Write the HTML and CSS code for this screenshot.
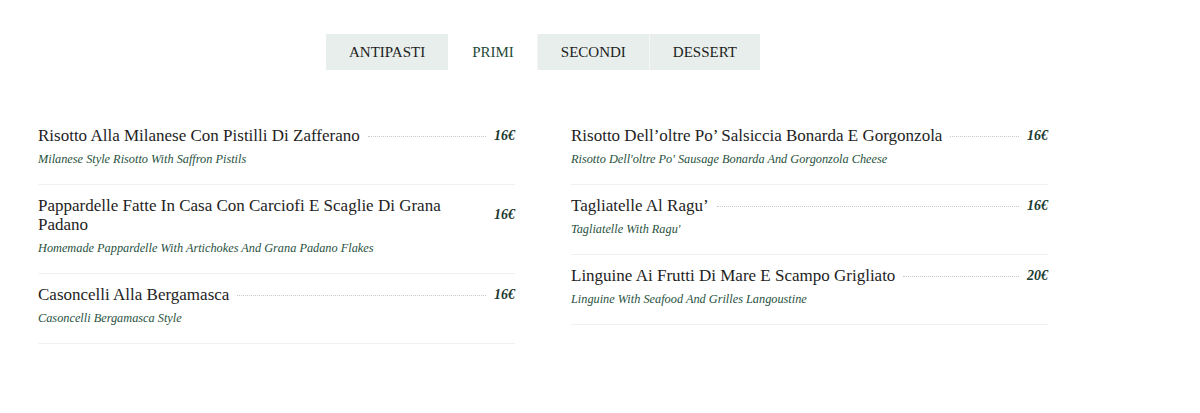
FILE: index.html
```html
<!DOCTYPE html>
<html lang="en">
<head>
    <meta charset="UTF-8">
    <meta name="viewport" content="width=device-width, initial-scale=1.0">
    <title>Menu - Primi</title>
    <link rel="stylesheet" href="styles.css">
</head>
<body>
    <div class="menu">
        <ul class="tabs">
            <li class="tab">Antipasti</li>
            <li class="tab active">Primi</li>
            <li class="tab">Secondi</li>
            <li class="tab">Dessert</li>
        </ul>

        <div class="columns">
            <div class="column">
                <div class="item">
                    <div class="item-head">
                        <span class="item-name">Risotto Alla Milanese Con Pistilli Di Zafferano</span>
                        <span class="dots"></span>
                        <span class="price">16€</span>
                    </div>
                    <p class="item-desc">Milanese Style Risotto With Saffron Pistils</p>
                </div>
                <div class="item">
                    <div class="item-head">
                        <span class="item-name">Pappardelle Fatte In Casa Con Carciofi E Scaglie Di Grana Padano</span>
                        <span class="dots"></span>
                        <span class="price">16€</span>
                    </div>
                    <p class="item-desc">Homemade Pappardelle With Artichokes And Grana Padano Flakes</p>
                </div>
                <div class="item">
                    <div class="item-head">
                        <span class="item-name">Casoncelli Alla Bergamasca</span>
                        <span class="dots"></span>
                        <span class="price">16€</span>
                    </div>
                    <p class="item-desc">Casoncelli Bergamasca Style</p>
                </div>
            </div>

            <div class="column">
                <div class="item">
                    <div class="item-head">
                        <span class="item-name">Risotto Dell’oltre Po’ Salsiccia Bonarda E Gorgonzola</span>
                        <span class="dots"></span>
                        <span class="price">16€</span>
                    </div>
                    <p class="item-desc">Risotto Dell'oltre Po' Sausage Bonarda And Gorgonzola Cheese</p>
                </div>
                <div class="item">
                    <div class="item-head">
                        <span class="item-name">Tagliatelle Al Ragu’</span>
                        <span class="dots"></span>
                        <span class="price">16€</span>
                    </div>
                    <p class="item-desc">Tagliatelle With Ragu'</p>
                </div>
                <div class="item">
                    <div class="item-head">
                        <span class="item-name">Linguine Ai Frutti Di Mare E Scampo Grigliato</span>
                        <span class="dots"></span>
                        <span class="price">20€</span>
                    </div>
                    <p class="item-desc">Linguine With Seafood And Grilles Langoustine</p>
                </div>
            </div>
        </div>
    </div>
</body>
</html>
```

FILE: styles.css
```css
body {
    margin: 0;
    padding: 0;
    background: #fff;
    font-family: "Liberation Serif", "DejaVu Serif", serif;
    color: #222;
}
.menu {
    width: 1010px;
    margin-left: 38px;
    padding-top: 34px;
}
.tabs {
    list-style: none;
    margin: 0 0 45px;
    padding: 0;
    display: flex;
    justify-content: center;
}
.tab {
    height: 36px;
    line-height: 36px;
    padding: 0 23px;
    background: #e8eeeb;
    border-left: 1px solid #f3f6f4;
    font-size: 15px;
    text-transform: uppercase;
    color: #1c1c1c;
}
.tab:first-child {
    border-left: none;
}
.tab.active {
    background: #fff;
    color: #1f4a3a;
    border-left-color: #fff;
}
.columns {
    display: flex;
    gap: 56px;
}
.column {
    flex: 1;
}
.item {
    padding: 11px 0 15px;
    border-bottom: 1px solid #eef1ef;
}
.item-head {
    display: flex;
    align-items: center;
}
.item-name {
    font-size: 17px;
    line-height: 19px;
    color: #1e1e1e;
}
.dots {
    flex: 1;
    margin: 2px 8px 0;
    border-bottom: 1px dotted #c8c8c8;
}
.price {
    font-size: 14px;
    font-style: italic;
    font-weight: bold;
    color: #1c3b30;
    white-space: nowrap;
}
.item-desc {
    margin: 4px 0 0;
    font-size: 12.3px;
    line-height: 20px;
    font-style: italic;
    color: #285240;
}
```
